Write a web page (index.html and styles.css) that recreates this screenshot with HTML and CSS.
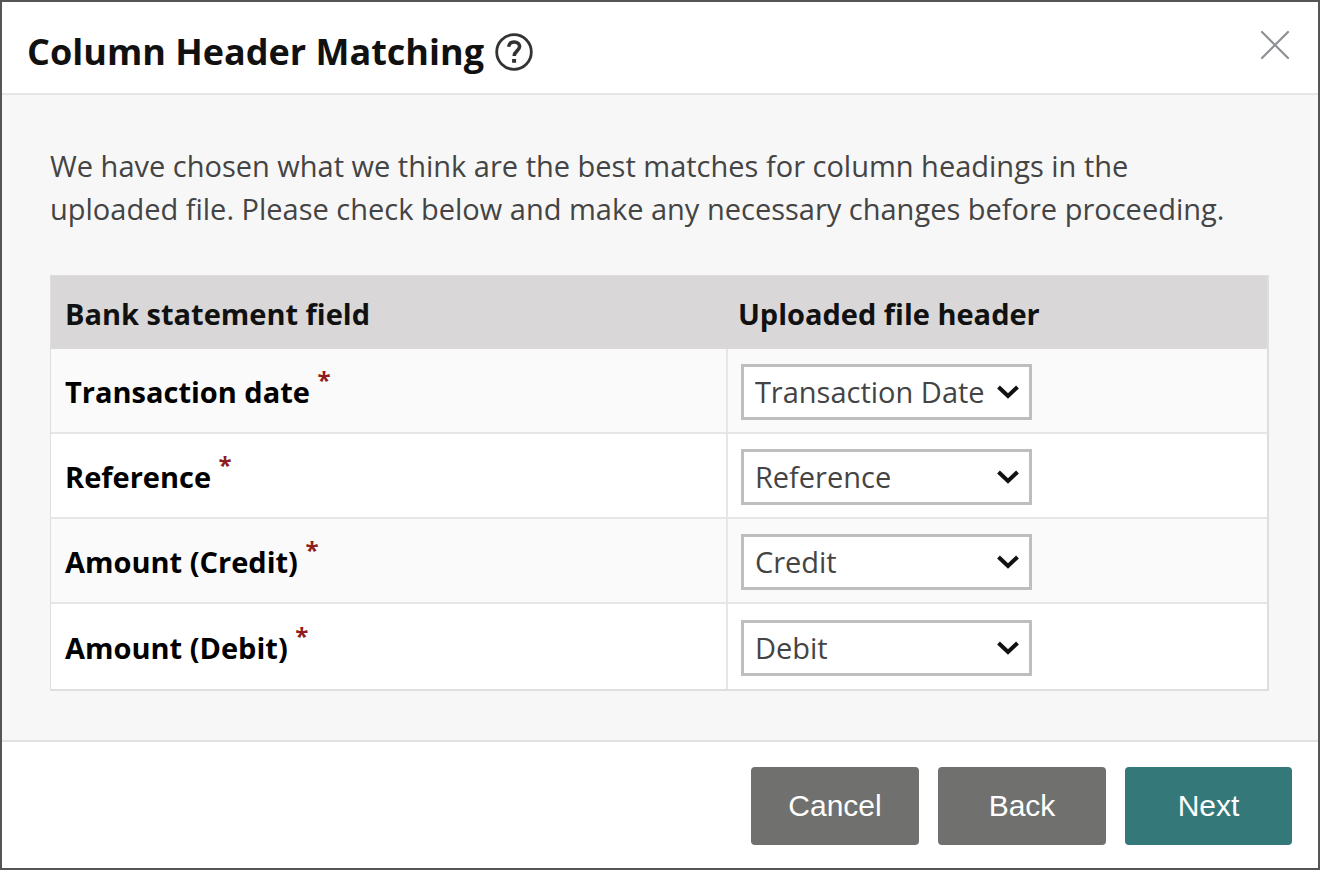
FILE: index.html
```html
<!DOCTYPE html>
<html lang="en">
<head>
    <meta charset="UTF-8">
    <meta name="viewport" content="width=device-width, initial-scale=1.0">
    <title>Column Header Matching</title>
    <link rel="stylesheet" href="styles.css">
</head>
<body>

    <div class="dialog" role="dialog" aria-labelledby="dialog-title">
        <!-- Title bar -->
        <header class="dialog-header">
            <h1 id="dialog-title">Column Header Matching</h1>
            <button type="button" class="icon-button" aria-label="Help">
                <svg width="40" height="40" viewBox="0 0 40 40" fill="none" stroke="#333">
                    <circle cx="20" cy="20" r="17.3" stroke-width="2.8"/>
                    <path d="M14.6 14.8c.4-3 2.6-4.800 5.600-4.800 3.300 0 5.400 1.800 5.400 4.600 0 4.200-5.400 4.400-5.400 9.400" stroke-width="3.600"/>
                    <path d="M18.100 27h4v3.800h-4z" fill="#333" stroke="none"/>
                </svg>
            </button>
            <button type="button" class="icon-button close" aria-label="Close">
                <svg width="30" height="30" viewBox="0 0 30 30" fill="none" stroke="#8d9094" stroke-width="2.2" stroke-linecap="round">
                    <path d="M2 2l26 26M28 2L2 28"/>
                </svg>
            </button>
        </header>

        <!-- Matches -->
        <form id="matching" class="dialog-body">
            <p class="intro">We have chosen what we think are the best matches for column headings in the uploaded file. Please check below and make any necessary changes before proceeding.</p>

            <table class="match-table">
                <thead>
                    <tr>
                        <th>Bank statement field</th>
                        <th>Uploaded file header</th>
                    </tr>
                </thead>
                <tbody>
                    <tr>
                        <td><label for="date">Transaction date <span class="required">*</span></label></td>
                        <td><select id="date"><option>Transaction Date</option></select></td>
                    </tr>
                    <tr>
                        <td><label for="reference">Reference <span class="required">*</span></label></td>
                        <td><select id="reference"><option>Reference</option></select></td>
                    </tr>
                    <tr>
                        <td><label for="credit">Amount (Credit) <span class="required">*</span></label></td>
                        <td><select id="credit"><option>Credit</option></select></td>
                    </tr>
                    <tr>
                        <td><label for="debit">Amount (Debit) <span class="required">*</span></label></td>
                        <td><select id="debit"><option>Debit</option></select></td>
                    </tr>
                </tbody>
            </table>
        </form>

        <!-- Actions -->
        <footer class="dialog-footer">
            <button type="button" class="btn">Cancel</button>
            <button type="button" class="btn">Back</button>
            <button type="submit" form="matching" class="btn btn-primary">Next</button>
        </footer>
    </div>

</body>
</html>
```
FILE: styles.css
```css
* {
    box-sizing: border-box;
}
body {
    margin: 0;
    font-family: "Open Sans", "Noto Sans", sans-serif;
    font-size: 29px;
    color: #444;
}
.dialog {
    display: flex;
    flex-direction: column;
    min-height: 100vh;
    background-color: #fff;
    border: 2px solid #555;
}

/* Title bar */
.dialog-header {
    display: flex;
    align-items: center;
    gap: 10px;
    padding: 24px 28px 16px 25px;
    border-bottom: 2px solid #e6e6e6;
}
h1 {
    margin: 0;
    font-size: 36px;
    line-height: 51px;
    font-weight: 700;
    color: #111;
}
.icon-button {
    display: flex;
    padding: 0;
    border: none;
    background: none;
    cursor: pointer;
}
.close {
    margin-left: auto;
    align-self: flex-start;
    padding-top: 4px;
}

/* Body */
.dialog-body {
    flex: 1;
    padding: 49px 49px 48px 48px;
    background-color: #f7f7f7;
}
.intro {
    margin: 0 0 45px;
    padding-right: 24px;
    line-height: 43px;
}
.match-table {
    width: 100%;
    table-layout: fixed;
    border-collapse: separate;
    border-spacing: 0;
    border: 1px solid #dedede;
    border-right-width: 2px;
    border-bottom-width: 2px;
    background-color: #fff;
}
th {
    height: 73px;
    padding: 2px 14px 0;
    background-color: #d9d7d8;
    color: #111;
    font-weight: 700;
    text-align: left;
}
th:first-child {
    width: 55.5%;
}
th:last-child {
    padding-left: 12px;
}
td {
    height: 85px;
    padding: 2px 14px 0;
    border-bottom: 2px solid #e6e6e6;
    font-weight: 700;
    color: #000;
}
td + td {
    border-left: 2px solid #e6e6e6;
    padding-left: 13px;
}
tbody tr:nth-child(odd) {
    background-color: #fafafa;
}
tbody tr:last-child td {
    border-bottom: none;
}
.required {
    color: #8f1d1d;
    font-size: 24px;
    line-height: 0;
    vertical-align: 14px;
}
select {
    display: block;
    width: 291px;
    height: 56px;
    padding: 0 36px 0 11px;
    appearance: none;
    border: 3px solid #bebebe;
    border-radius: 0;
    background: #fff url("data:image/svg+xml,%3Csvg xmlns='http://www.w3.org/2000/svg' width='22' height='14' viewBox='0 0 22 14'%3E%3Cpath d='M1.5 2l9.5 9 9.5-9' fill='none' stroke='%23111' stroke-width='4'/%3E%3C/svg%3E") no-repeat right 10px center;
    color: #444;
    font-family: inherit;
    font-size: 29px;
}

/* Actions */
.dialog-footer {
    display: flex;
    justify-content: flex-end;
    gap: 19px;
    padding: 25px 26px 23px;
    border-top: 2px solid #e2e2e2;
}
.btn {
    width: 168px;
    height: 78px;
    border: none;
    border-radius: 4px;
    background-color: #70706e;
    color: #fff;
    font-family: "Liberation Sans", Arial, sans-serif;
    font-size: 30px;
    cursor: pointer;
}
.btn-primary {
    width: 167px;
    background-color: #34787a;
}
```
